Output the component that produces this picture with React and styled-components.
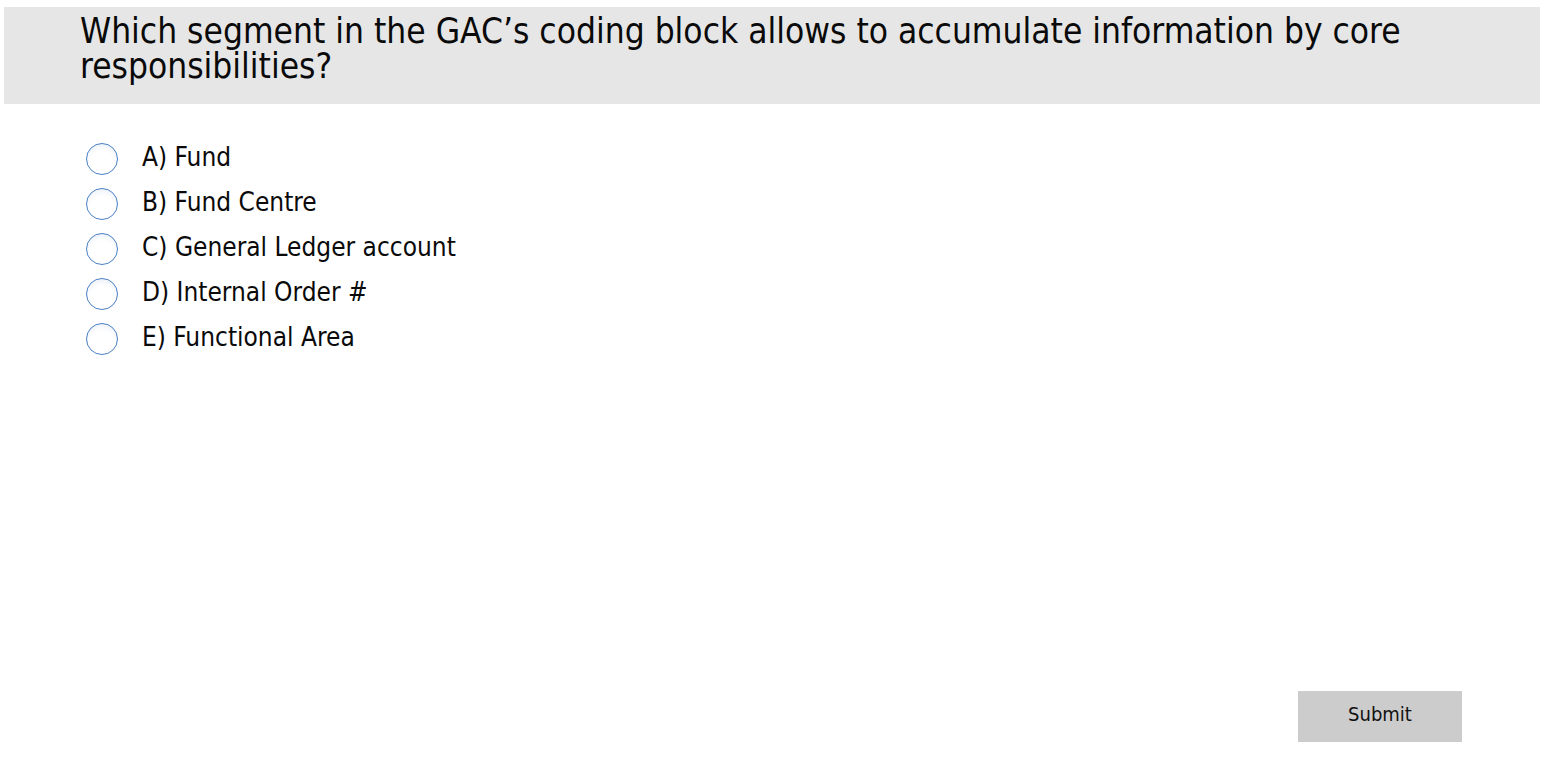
import React, { useState } from 'react';
import styled, { createGlobalStyle } from 'styled-components';

const GlobalStyle = createGlobalStyle`
	html, body {
		margin: 0;
		padding: 0;
		background: #ffffff;
	}
	body {
		font-family: 'DejaVu Sans Condensed', 'DejaVu Sans', sans-serif;
		color: #000000;
	}
`;

const Page = styled.div`
	width: 1543px;
	height: 770px;
	box-sizing: border-box;
	padding: 7px 3px 0 4px;
	display: flex;
	flex-direction: column;
`;

const Header = styled.div`
	background-color: #e6e6e6;
	height: 97px;
	box-sizing: border-box;
	padding: 7px 40px 0 76px;
`;

const Question = styled.h1`
	margin: 0;
	font-size: 35px;
	font-weight: normal;
	line-height: 35px;
	color: #0a0a0a;
`;

const Options = styled.div`
	display: flex;
	flex-direction: column;
	gap: 13px;
	padding: 39px 0 0 82px;
`;

const Option = styled.label`
	display: flex;
	align-items: center;
	gap: 24px;
	cursor: pointer;
	height: 32px;
`;

const Radio = styled.span`
	width: 30px;
	height: 30px;
	border-radius: 50%;
	border: 1.5px solid #4a80c4;
	background: radial-gradient(circle at 50% 65%, #ffffff 50%, #e4ebf5 100%);
	flex-shrink: 0;
	display: flex;
	align-items: center;
	justify-content: center;
	&::after {
		content: '';
		width: 14px;
		height: 14px;
		border-radius: 50%;
		background: ${(p) => (p.checked ? '#3f7cc7' : 'transparent')};
	}
`;

const OptionText = styled.span`
	font-size: 26px;
	line-height: 30px;
	margin-top: -5px;
	color: #0a0a0a;
`;

const Footer = styled.div`
	flex: 1;
	display: flex;
	justify-content: flex-end;
	align-items: flex-end;
	padding: 0 78px 28px 0;
`;

const SubmitButton = styled.button`
	width: 164px;
	height: 51px;
	border: none;
	background-color: #cccccc;
	font-family: 'DejaVu Sans Condensed', 'DejaVu Sans', sans-serif;
	font-size: 20px;
	color: #111111;
	padding: 0 0 6px;
	cursor: pointer;
`;

const answers = [
	'A) Fund',
	'B) Fund Centre',
	'C) General Ledger account',
	'D) Internal Order #',
	'E) Functional Area',
];

const App = () => {
	const [selected, setSelected] = useState(null);
	return (
		<>
			<GlobalStyle />
			<Page>
				<Header>
					<Question>
						Which segment in the GAC’s coding block allows to accumulate information by core
						responsibilities?
					</Question>
				</Header>
				<Options>
					{answers.map((a, i) => (
						<Option key={a} onClick={() => setSelected(i)}>
							<Radio checked={selected === i} />
							<OptionText>{a}</OptionText>
						</Option>
					))}
				</Options>
				<Footer>
					<SubmitButton>Submit</SubmitButton>
				</Footer>
			</Page>
		</>
	);
};

export default App;
